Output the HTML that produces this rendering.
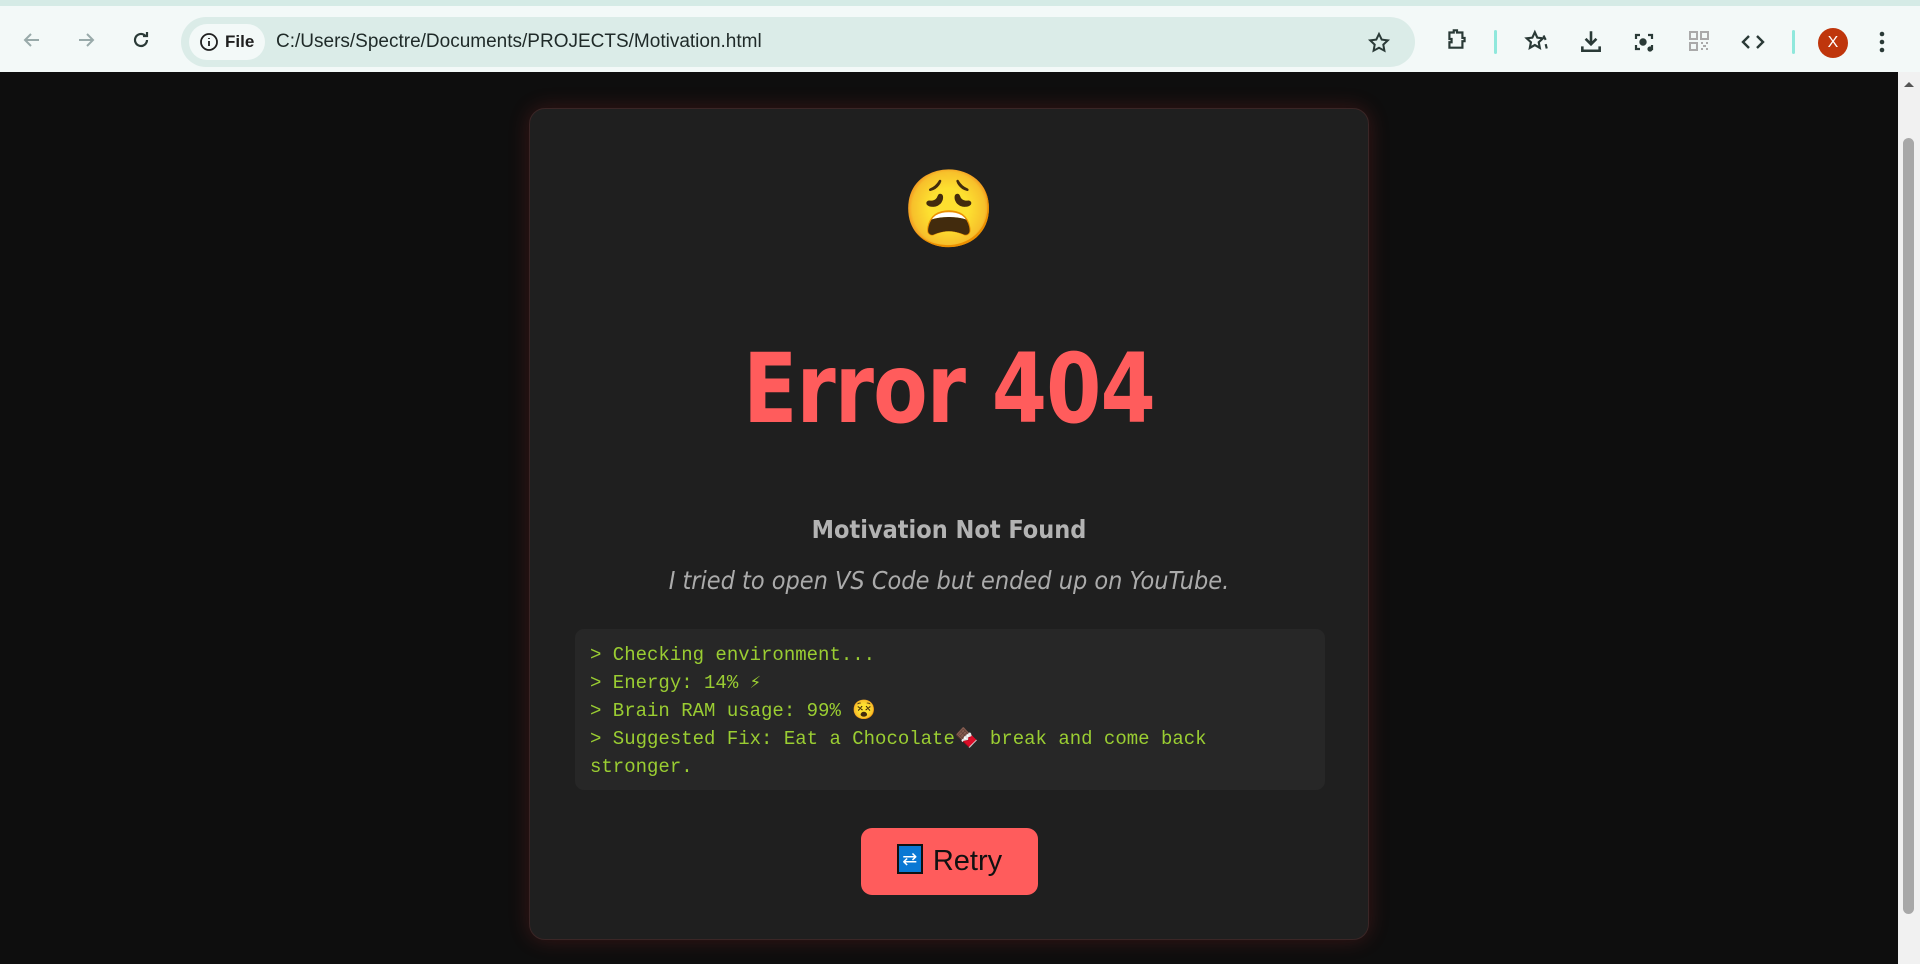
<!DOCTYPE html>
<html><head><meta charset="utf-8"><style>
*{margin:0;padding:0;box-sizing:border-box}
body{width:1920px;height:964px;overflow:hidden;background:#0e0e0e;font-family:"Liberation Sans",sans-serif;position:relative}
.chrome{position:absolute;left:0;top:0;width:1920px;height:72px;background:#f3f9f8;border-top:6px solid #d5ebe6}
.addr{position:absolute;left:181px;top:11px;width:1234px;height:50px;border-radius:25px;background:#dbece8}
.chip{position:absolute;left:8px;top:7px;height:36px;width:76px;border-radius:18px;background:#f3f9f8;font-size:17px;font-weight:bold;color:#1f1f1f;line-height:36px;padding-left:36px}
.url{position:absolute;left:95px;top:0;line-height:50px;font-size:19px;color:#1f2a28}
.ic{position:absolute}
.page{position:absolute;left:0;top:72px;width:1898px;height:892px;background:#0e0e0e}
.sb{position:absolute;left:1898px;top:72px;width:22px;height:892px;background:#f1f1f1}
.thumb{position:absolute;left:1903px;top:138px;width:11px;height:776px;border-radius:6px;background:#a8a8a8}
.card{position:absolute;left:529px;top:108px;width:840px;height:832px;background:#1f1f1f;border:1px solid #3a2626;border-radius:16px;box-shadow:0 0 22px rgba(255,60,60,.18)}
.emoji{position:absolute;left:0;width:100%;top:55px;text-align:center;font-size:76px;line-height:90px;font-family:"Noto Color Emoji",sans-serif}
h1{position:absolute;left:0;width:100%;top:230px;text-align:center;color:#ff5c5c;font-size:96px;line-height:100px;font-weight:bold;font-family:"DejaVu Sans Condensed","Liberation Sans",sans-serif;letter-spacing:-1px;transform:scaleX(0.92)}
h2{position:absolute;left:0;width:100%;top:406px;text-align:center;color:#b3b3b3;font-size:25px;font-weight:bold;font-family:"DejaVu Sans Condensed","Liberation Sans",sans-serif}
.it{position:absolute;left:0;width:100%;top:457px;text-align:center;color:#ababab;font-size:25px;font-style:italic;font-family:"DejaVu Sans Condensed","Liberation Sans",sans-serif}
.term{position:absolute;left:45px;top:520px;width:750px;height:161px;background:#272727;border-radius:9px;padding:12px 15px;font-family:"Liberation Mono",monospace;font-size:19px;line-height:28px;color:#9acd32}
.btn{position:absolute;left:331px;top:719px;width:177px;height:67px;background:#ff5c5c;border-radius:11px;font-size:29px;color:#111;text-align:center;line-height:67px}
.rep{display:inline-block;width:26px;height:30px;background:#0a78d4;border:2px solid #111;vertical-align:middle;margin-right:10px;margin-top:-6px;color:#fff;font-size:18px;line-height:26px}
</style></head><body>
<div class="chrome">
 <svg class="ic" style="left:20px;top:22px" width="24" height="24" viewBox="0 0 24 24" fill="none" stroke="#9aa" stroke-width="2"><path d="M19 12H5M11 6l-6 6 6 6"/></svg>
 <svg class="ic" style="left:74px;top:22px" width="24" height="24" viewBox="0 0 24 24" fill="none" stroke="#9aa" stroke-width="2"><path d="M5 12h14M13 6l6 6-6 6"/></svg>
 <svg class="ic" style="left:129px;top:22px" width="24" height="24" viewBox="0 0 24 24" fill="none" stroke="#2a3a37" stroke-width="2.2"><path d="M18 12a6 6 0 1 1-2-4.5M18 4v4h-4"/></svg>
 <div class="addr"><div class="chip"><svg style="position:absolute;left:10px;top:8px" width="20" height="20" viewBox="0 0 20 20" fill="none" stroke="#1f1f1f" stroke-width="1.8"><circle cx="10" cy="10" r="8"/><path d="M10 9v5M10 6v1"/></svg>File</div><div class="url">C:/Users/Spectre/Documents/PROJECTS/Motivation.html</div>
 <svg class="ic" style="left:1186px;top:14px" width="24" height="24" viewBox="0 0 24 24" fill="none" stroke="#2a3a37" stroke-width="2"><path d="M12 3l2.7 5.6 6.1.8-4.5 4.2 1.1 6.1L12 16.8l-5.4 2.9 1.1-6.1-4.5-4.2 6.1-.8z"/></svg></div>
 <svg class="ic" style="left:1444px;top:20px" width="26" height="26" viewBox="0 0 24 24" fill="none" stroke="#2a3a37" stroke-width="2"><path d="M5 6h4V4h3v2h5v5h2v3h-2v6H5v-5h2v-3H5z"/></svg>
 <div class="ic" style="left:1494px;top:24px;width:3px;height:24px;background:#8fe8dc;border-radius:2px"></div>
 <svg class="ic" style="left:1524px;top:23px" width="26" height="26" viewBox="0 0 24 24" fill="none" stroke="#2a3a37" stroke-width="2"><path d="M10 3l2.3 5 5.2.6-3.9 3.6 1 5.2L10 14.8l-4.6 2.6 1-5.2L2.5 8.6l5.2-.6zM18 6l2 4M20 14l1 4"/></svg>
 <svg class="ic" style="left:1578px;top:22px" width="26" height="26" viewBox="0 0 24 24" fill="none" stroke="#2a3a37" stroke-width="2.4"><path d="M12 3v12M7 10l5 5 5-5M4 17v4h16v-4"/></svg>
 <svg class="ic" style="left:1632px;top:24px" width="24" height="24" viewBox="0 0 24 24" fill="none" stroke="#2a3a37" stroke-width="2.2"><path d="M4 9V5h4M16 5h4v4M20 15v4h-4M8 19H4v-4"/><circle cx="11" cy="12" r="2.6" fill="#2a3a37"/><circle cx="18" cy="19" r="1.5" fill="#2a3a37"/></svg>
 <svg class="ic" style="left:1688px;top:24px" width="22" height="22" viewBox="0 0 22 22" fill="none" stroke="#aaa" stroke-width="2"><rect x="2" y="2" width="7" height="7"/><rect x="13" y="2" width="7" height="7"/><rect x="2" y="13" width="7" height="7"/><path d="M13 13h2M18 13h2M15 16h3M13 19h2M18 19h2"/></svg>
 <svg class="ic" style="left:1740px;top:24px" width="26" height="24" viewBox="0 0 26 24" fill="none" stroke="#2a3a37" stroke-width="2.4"><path d="M9 6l-6 6 6 6M17 6l6 6-6 6"/></svg>
 <div class="ic" style="left:1792px;top:24px;width:3px;height:24px;background:#8fe8dc;border-radius:2px"></div>
 <div class="ic" style="left:1818px;top:22px;width:30px;height:30px;border-radius:50%;background:#bf360c;color:#fff;font-size:16px;line-height:30px;text-align:center">X</div>
 <svg class="ic" style="left:1878px;top:24px" width="8" height="24" viewBox="0 0 8 24" fill="#2a3a37"><circle cx="4" cy="4" r="2.3"/><circle cx="4" cy="12" r="2.3"/><circle cx="4" cy="20" r="2.3"/></svg>
</div>
<div class="page"></div>
<div class="sb"><svg style="position:absolute;left:5px;top:8px" width="12" height="8"><path d="M1 7l5-5 5 5z" fill="#555"/></svg></div>
<div class="thumb"></div>
<div class="card">
 <div class="emoji">😩</div>
 <h1>Error 404</h1>
 <h2>Motivation Not Found</h2>
 <div class="it">I tried to open VS Code but ended up on YouTube.</div>
 <div class="term">&gt; Checking environment...<br>&gt; Energy: 14% ⚡<br>&gt; Brain RAM usage: 99% 😵<br>&gt; Suggested Fix: Eat a Chocolate🍫 break and come back stronger.</div>
 <div class="btn"><span class="rep">⇄</span>Retry</div>
</div>
</body></html>
